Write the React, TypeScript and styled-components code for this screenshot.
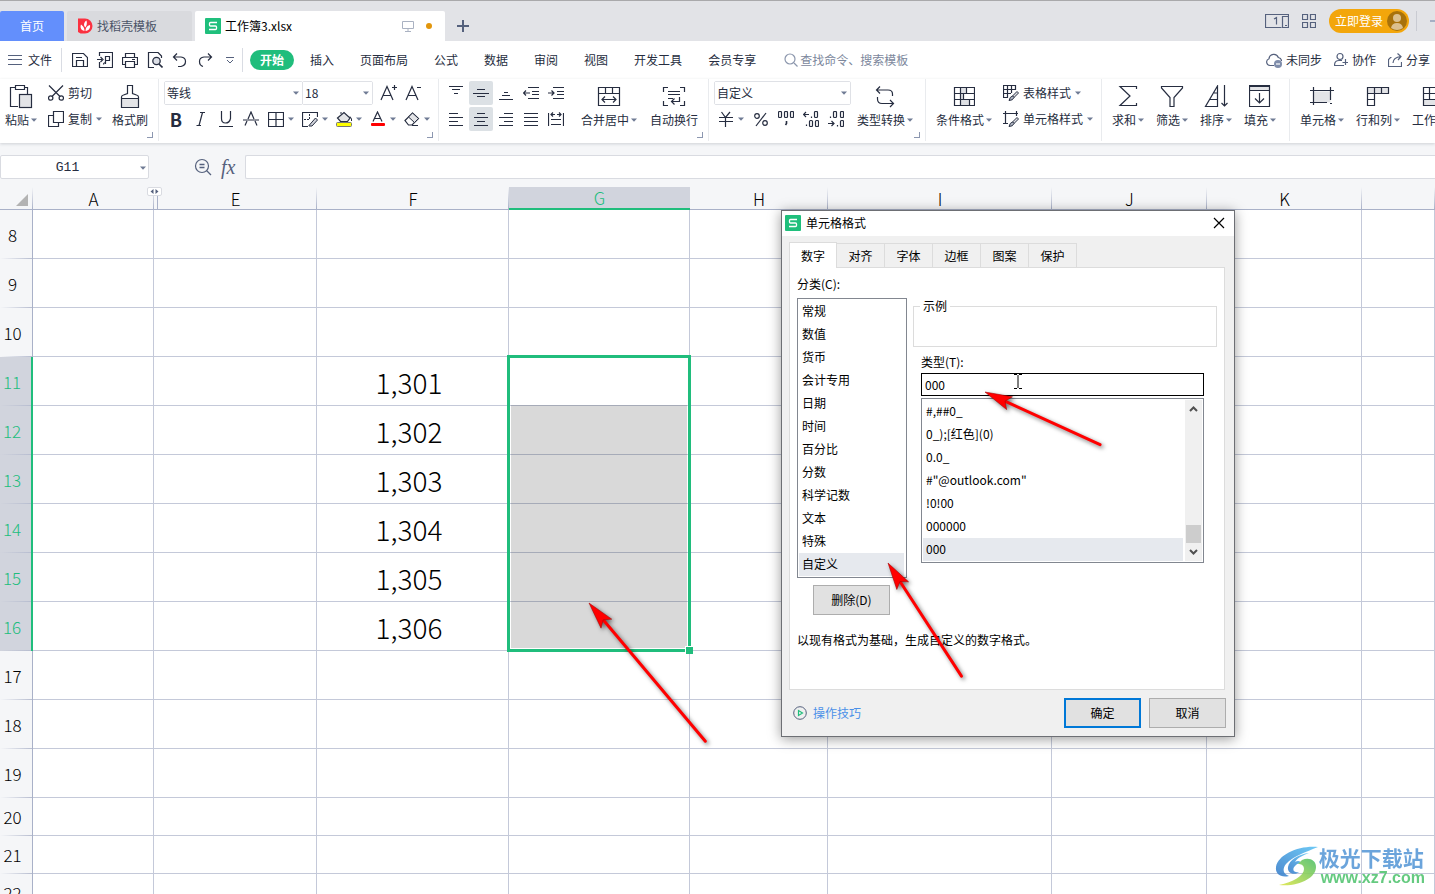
import React from 'react';
import styled, { createGlobalStyle, css } from 'styled-components';

const ink = '#262d40';
const slate = '#55617d';
const green = '#20bd7c';
const line = '#c4c9d9';

const GlobalStyle = createGlobalStyle`
  * { box-sizing: border-box; }
  body {
    margin: 0;
    overflow: hidden;
    font-family: "Noto Sans CJK SC", "Noto Sans", sans-serif;
    font-size: 12px;
    line-height: 18px;
    color: ${ink};
    background: #fff;
  }
  button, input, select { font: inherit; color: inherit; margin: 0; padding: 0; border: 0; background: none; }
  button { white-space: nowrap; }
  svg { display: block; flex: none; }
`;

/* ---------- icons ---------- */

type IconProps = { w?: number; h?: number; color?: string; children: React.ReactNode };

const Icon = ({ w = 16, h = 16, color = ink, children }: IconProps) => (
  <svg width={w} height={h} viewBox={`0 0 ${w} ${h}`} fill="none" stroke={color} strokeWidth="1" aria-hidden="true">
    {children}
  </svg>
);

const Caret = () => (
  <svg width="6" height="4" viewBox="0 0 6 4" aria-hidden="true">
    <path d="M0 0.500h6L3 3.800z" fill="#6f7b94" />
  </svg>
);

const SheetLogo = () => (
  <Icon color="#fff">
    <rect width="16" height="16" rx="1" fill="#1fbf7c" stroke="none" />
    <path d="M12 4.500H5.500Q4.500 4.500 4.500 5.500V7Q4.500 8 5.500 8H10.500Q11.500 8 11.500 9V10.500Q11.500 11.500 10.500 11.500H4" strokeWidth="1.300" />
  </Icon>
);

const DocerLogo = () => (
  <Icon color="none">
    <path d="M1 0.500H8A7.500 7.500 0 0 1 8 15.500H3.500L1 14z" fill="#fb3140" />
    <path d="M7.500 13C3.500 12 3 9 4 6.500C6 8 7.500 9.500 7.500 13zM7.300 8C6.500 6 7.500 3.500 9.500 2.500C10.300 5.500 9.800 7.500 8.300 9.500zM8.500 13C8.500 10 10 7.500 13 7C13.500 10 12 12.500 8.500 13z" fill="#fff" />
  </Icon>
);

const icons = {
  menu: <Icon w={14} h={12} color={slate}><path d="M0 1.500h14M0 5.500h14M0 10.500h14" /></Icon>,
  save: <Icon><path d="M0.500 1.500H11.500L15.500 5.500V14.500H0.500zM4.500 14V8.500H11.500V14M4 5.500H10" strokeWidth="1.200" /></Icon>,
  pdf: <Icon><path d="M2.500 4V0.500H15.500V15.500H2.500V10M0 7.500H5M3.500 5L6 7.500L3.500 10M8.500 12V4.500H12.500V8.500H8.500M6.500 12.500Q6.500 10.500 9 10.500" strokeWidth="1.200" /></Icon>,
  print: <Icon><path d="M3.500 5V1.500H12.500V5M3.500 12.500H0.500V5.500H15.500V12.500H12.500M3.500 9.500H12.500V15.500H3.500zM10 7.500H13" strokeWidth="1.200" /></Icon>,
  preview: <Icon><path d="M7 15.500H1.500V0.500H11L14.500 4V6" strokeWidth="1.200" /><circle cx="9.500" cy="9" r="3.700" fill="#dcdfe6" strokeWidth="1.300" /><path d="M12 12L15.500 15.500" strokeWidth="1.600" /></Icon>,
  undo: <Icon><path d="M5 1.500L1.500 5L5 8.500M1.500 5H9Q13.500 5.500 13.500 9.500T9 14.500H6" strokeWidth="1.200" /></Icon>,
  redo: <Icon><path d="M11 1.500L14.500 5L11 8.500M14.500 5H7Q2.500 5.500 2.500 9.500T6 14.500" strokeWidth="1.200" /></Icon>,
  more: <Icon w={8} h={8} color={slate}><path d="M0 1.500H8M1 4L4 7L7 4" /></Icon>,
  search: <Icon w={14} h={14} color="#8c97ad"><circle cx="6" cy="6" r="5" strokeWidth="1.200" /><path d="M10 10L13.500 13.500" strokeWidth="1.200" /></Icon>,
  cloud: <Icon color={slate}><path d="M8 13.500H4A3.500 3.500 0 0 1 3 6.700A4.800 4.800 0 0 1 12.300 5.500Q15.500 6 15.500 9" strokeWidth="1.200" /><circle cx="12" cy="12" r="4" fill="#7f8dab" stroke="none" /><path d="M10 12H14" stroke="#fff" strokeWidth="1.200" /></Icon>,
  collab: <Icon w={14} color={slate}><circle cx="6" cy="4.500" r="3" strokeWidth="1.200" /><path d="M10 13.500H0.500Q0.500 8.500 5 8.500H8M11.500 7V13M8.500 10.500H14" strokeWidth="1.200" /></Icon>,
  share: <Icon w={14} color={slate}><path d="M3.500 5.500H2.500L0.500 7.500V14.500H13.500V10M5 11Q5 5.500 13 4.500M9.500 1.500L13 4.500L10 8" strokeWidth="1.200" /></Icon>,
  paste: <Icon w={24} h={26}><path d="M7 3.500H1.500V22.500H9M15 3.500H18.500V10M6.500 1.500H15.500V5.500H6.500z" strokeWidth="1.200" /><rect x="10.500" y="10.500" width="12" height="13" fill="#e3e4e7" strokeWidth="1.200" /></Icon>,
  cut: <Icon><path d="M1 0.500L12 11.500M15 0.500L4 11.500" strokeWidth="1.200" /><circle cx="2.700" cy="13" r="2.200" strokeWidth="1.200" /><circle cx="13.300" cy="13" r="2.200" strokeWidth="1.200" /></Icon>,
  copy: <Icon><path d="M5.500 0.500H15.500V11.500H5.500zM5 4.500H0.500V15.500H10.500V12" strokeWidth="1.200" /></Icon>,
  brush: <Icon w={20} h={26}><path d="M1.500 14.500H18.500V23.500H1.500z" fill="#e3e4e7" /><path d="M1.500 23.500V13Q1.500 11.500 3.500 11L7.500 9.500V1.500H12.500V9.500L16.500 11Q18.500 11.500 18.500 13V23.500z" strokeWidth="1.200" /></Icon>,
  growFont: <Icon w={18} h={18}><path d="M2 16L8 2.500L14 16M4.500 11.500H11.500M13 3.500H18M15.500 1V6" strokeWidth="1.200" /></Icon>,
  shrinkFont: <Icon w={18} h={18}><path d="M2 16L8 2.500L14 16M4.500 11.500H11.500M13 3.500H17" strokeWidth="1.200" /></Icon>,
  italic: <Icon><path d="M7 1.500H12M3.500 14.500H8M9.500 1.500L6 14.500" strokeWidth="1.200" /></Icon>,
  underline: <Icon><path d="M3.500 0V7.500Q3.500 12 7.500 12T12.500 7.500V0M1 15.500H15" strokeWidth="1.200" /></Icon>,
  strike: <Icon><path d="M5 8L8 1L11 8M4 10L2 14.500M12 10L14 14.500M0 9H16" strokeWidth="1.200" /></Icon>,
  borders: <Icon><path d="M0.500 1.500H15.500V15.500H0.500zM0 8.500H16M8 1.500V15.500" strokeWidth="1.200" /></Icon>,
  drawBorder: <Icon><path d="M15.500 6V1.500H0.500V15.500H6" strokeWidth="1.200" /><path d="M7.500 3V9M2 8.500H8" strokeDasharray="2 1" /><path d="M7 14.500L13.500 7L15.500 9L10 15H7z" fill="#cfd2da" /></Icon>,
  fill: <Icon><path d="M1.500 7L8 1.500L14 7L11.500 10.500H4.500z" fill="#e3e4e7" strokeWidth="1.200" /><path d="M14 5.500L15.500 8V10M5 3V1" /><rect x="0.500" y="11.500" width="15" height="4" rx="1" fill="#ff0" stroke="#777" /></Icon>,
  fontColor: <Icon><path d="M3 10.500L7.500 1L12 10.500M4.500 7.500H10.500" strokeWidth="1.200" /><rect x="1" y="12" width="14" height="3" rx="1" fill="#f00" stroke="none" /></Icon>,
  eraser: <Icon><path d="M1 9.500L8.500 2L14.500 7.500L8 14H4.500z" strokeWidth="1.200" /><path d="M4.500 6L8.500 2L14.500 7.500L10.500 11.500z" fill="#e3e4e7" /><path d="M8 14.500H14" /></Icon>,
  top: <Icon><path d="M1 1.500H15M4 4.500H12M6 8.500H10" strokeWidth="1.200" /></Icon>,
  middle: <Icon><path d="M4 4.500H12M0 8.500H16M4 11.500H12" strokeWidth="1.200" /></Icon>,
  bottom: <Icon><path d="M6 7.500H10M4 10.500H12M1 14.500H15" strokeWidth="1.200" /></Icon>,
  outdent: <Icon><path d="M5 2.500H16M9 6.500H16M9 9.500H16M5 13.500H16M0.500 8H7M3 5.500L0.500 8L3 10.500" strokeWidth="1.200" /></Icon>,
  indent: <Icon><path d="M5 2.500H16M9 6.500H16M9 9.500H16M5 13.500H16M0 8H6M3.500 5.500L6 8L3.500 10.500" strokeWidth="1.200" /></Icon>,
  left: <Icon><path d="M1 2.500H10M1 6.500H15M1 10.500H10M1 14.500H15" strokeWidth="1.200" /></Icon>,
  center: <Icon><path d="M4 2.500H12M1 6.500H15M4 10.500H12M1 14.500H15" strokeWidth="1.200" /></Icon>,
  right: <Icon><path d="M6 2.500H15M1 6.500H15M6 10.500H15M1 14.500H15" strokeWidth="1.200" /></Icon>,
  justify: <Icon><path d="M1 2.500H15M1 6.500H15M1 10.500H15M1 14.500H15" strokeWidth="1.200" /></Icon>,
  distribute: <Icon><path d="M0.500 2V15M15.500 2V15M3 8.500H13M3 13.500H13M3 3.500H7M9 3.500H13M5 1.500L3 3.500L5 5.500M11 1.500L13 3.500L11 5.500" strokeWidth="1.200" /></Icon>,
  merge: <Icon w={24} h={24}><path d="M1.500 2.500H22.500V20.500H1.500zM1.500 8.500H22.500M8.500 2.500V8.500M15.500 2.500V8.500M5 14.500H19M8 11.500L5 14.500L8 17.500M16 11.500L19 14.500L16 17.500" strokeWidth="1.200" /></Icon>,
  wrap: <Icon w={24} h={24}><path d="M6 2.500H1.500V7M18 2.500H22.500V7M6 20.500H1.500V16M18 20.500H22.500V16M6 6.500H18M6 9.500H18M6 13.500H11M17.500 12V16.500H10M12.500 13.500L9.500 16.500L12.500 19.500" strokeWidth="1.200" /></Icon>,
  yen: <Icon><path d="M3.500 1L7.500 6.500L12 1M1 6.500H15M1 10.500H15M7.500 6.500V16" strokeWidth="1.200" /></Icon>,
  percent: <Icon><circle cx="4" cy="5" r="2.300" strokeWidth="1.200" /><circle cx="12" cy="12" r="2.300" strokeWidth="1.200" /><path d="M13 2L3 15" strokeWidth="1.200" /></Icon>,
  thousands: <Icon><rect x="0.500" y="0.500" width="3" height="6" rx="1" strokeWidth="1.200" /><rect x="6.500" y="0.500" width="3" height="6" rx="1" strokeWidth="1.200" /><rect x="12.500" y="0.500" width="3" height="6" rx="1" strokeWidth="1.200" /><path d="M8.500 10V12.500L7.500 14" strokeWidth="1.600" /></Icon>,
  moreDecimals: <Icon><path d="M0.500 3.500H6M3 1L0.500 3.500L3 6M8.500 5.500V7M3.500 13.500V15" strokeWidth="1.200" /><rect x="11.500" y="0.500" width="3" height="6" rx="1" strokeWidth="1.200" /><rect x="6.500" y="9.500" width="3" height="6" rx="1" strokeWidth="1.200" /><rect x="12.500" y="9.500" width="3" height="6" rx="1" strokeWidth="1.200" /></Icon>,
  lessDecimals: <Icon><path d="M0 12.500H6M3.500 10L6 12.500L3.500 15M2.500 5.500V7M9.500 14V15.500" strokeWidth="1.200" /><rect x="5.500" y="0.500" width="3" height="6" rx="1" strokeWidth="1.200" /><rect x="12.500" y="0.500" width="3" height="6" rx="1" strokeWidth="1.200" /><rect x="12.500" y="9.500" width="3" height="6" rx="1" strokeWidth="1.200" /></Icon>,
  convert: <Icon w={20} h={24}><path d="M5 1.500L1.500 5L5 8.500M1.500 5H13Q17.500 5 17.500 9V11M15 15L18.500 18.500L15 22M18.500 18.500H7Q2.500 18.500 2.500 14V12" strokeWidth="1.200" /></Icon>,
  condFormat: <Icon w={22} h={24}><path d="M7.500 2.500H13.500V8.500H7.500zM7.500 8.500H10.500V14.500H7.500zM7.500 14.500H16.500V20.500H7.500z" fill="#dfe1e5" stroke="none" /><path d="M1.500 2.500H21.500V20.500H1.500zM1.500 8.500H21.500M1.500 14.500H21.500M7.500 2.500V20.500M13.500 2.500V8.500M10.500 8.500V14.500M16.500 14.500V20.500" strokeWidth="1.200" /></Icon>,
  tableStyle: <Icon><path d="M5 12.500H0.500V0.500H12.500V5M0.500 4.500H12.500M0.500 8.500H8M4.500 0.500V12.500M8.500 0.500V8" strokeWidth="1.200" /><path d="M14 6.500L15.500 8L11 12.500L9.500 11z" fill="#dfe1e5" /><path d="M9.500 11L11 12.500Q10 15.500 6 15.500Q7 11.500 9.500 11z" fill="#b4b9c6" /></Icon>,
  cellStyle: <Icon><path d="M2.500 0V13M0 2.500H15M13.500 0V5M0 12.500H5" strokeWidth="1.200" /><path d="M14 6.500L15.500 8L11 12.500L9.500 11z" fill="#dfe1e5" /><path d="M9.500 11L11 12.500Q10 15.500 6 15.500Q7 11.500 9.500 11z" fill="#b4b9c6" /></Icon>,
  sum: <Icon w={20} h={24}><path d="M18.500 4V1.500H2L12 11L2 20.500H18.500V18" strokeWidth="1.200" /></Icon>,
  filter: <Icon w={24} h={24}><path d="M1.500 1.500H22.500V3L14 12.500V21.500H10V12.500L1.500 3z" strokeWidth="1.200" /></Icon>,
  sort: <Icon w={24} h={24}><path d="M13.500 21.500H1.500L13.500 1zM6 14.500H13.500M10 8H13.500M20.500 0V21M17.500 18L20.500 21L23.500 18" strokeWidth="1.200" /></Icon>,
  fillDown: <Icon w={22} h={24}><path d="M0.500 1.500H20.500V5.500H0.500z" fill="#e3e4e7" /><path d="M0.500 0.500H20.500V21.500H0.500zM0.500 5.500H20.500M10.500 8V18M6 13.500L10.500 18L15 13.500" strokeWidth="1.200" /></Icon>,
  cells: <Icon w={24} h={24}><path d="M3.500 6.500H20.500V17.500H3.500z" fill="#e3e4e7" stroke="none" /><path d="M3.500 2V20M20.500 2V15M0 5.500H24M0 17.500H17M20 18.500H22" strokeWidth="1.200" /></Icon>,
  rowsCols: <Icon w={24} h={24}><path d="M1.500 2.500H22.500V8.500H1.500z" fill="#e3e4e7" /><path d="M1.500 20.500V2.500H22.500V8.500H8.500V20.500zM1.500 8.500H8.500M1.500 14.500H8.500M8.500 2.500V8.500M15.500 2.500V8.500" strokeWidth="1.200" /></Icon>,
  sheet: <Icon w={24} h={24}><path d="M1.500 14.500H22.500V20.500H1.500z" fill="#e3e4e7" /><path d="M1.500 2.500H22.500V20.500H1.500zM1.500 8.500H22.500M1.500 14.500H22.500M7.500 2.500V14.500M14.500 2.500V14.500" strokeWidth="1.200" /></Icon>,
  zoomOut: <Icon w={18} h={18} color={slate}><circle cx="8" cy="8" r="6.500" strokeWidth="1.200" /><path d="M5.500 6.500H10.500M5.500 9.500H10.500M12.500 12.500L17 17" strokeWidth="1.300" /></Icon>,
  screens: <Icon w={24} h={14} color={slate}><path d="M16.500 13.500H0.500V0.500H23.500V13.500H17.500V2.500H23M9 5L11.500 3.500V10.500M20 11.500H22" strokeWidth="1.200" /></Icon>,
  grid: <Icon w={14} h={14} color={slate}><path d="M0.500 0.500H5.500V5.500H0.500zM8.500 0.500H13.500V5.500H8.500zM0.500 8.500H5.500V13.500H0.500zM8.500 8.500H13.500V13.500H8.500z" strokeWidth="1.200" /></Icon>,
  monitor: <Icon w={12} h={12} color="#aab2c2"><path d="M0.500 1.500H11.500V8.500H0.500zM6 8.500V11M3 11.500H9" /></Icon>,
  plus: <Icon w={12} h={12} color={slate}><path d="M6 0V12M0 6H12" strokeWidth="2" /></Icon>,
  close: <Icon w={12} h={12} color="#000"><path d="M1 1L11 11M11 1L1 11" strokeWidth="1.200" /></Icon>,
  tips: <Icon w={14} h={14} color={slate}><circle cx="7" cy="7" r="6.300" /><path d="M5.500 4.500V9.500L9.500 7z" stroke={green} strokeWidth="1.200" /></Icon>,
};

/* ---------- window chrome ---------- */

const Page = styled.div`
  position: relative;
  display: flex;
  flex-direction: column;
  height: 100vh;
  overflow: hidden;
`;

const TitleBar = styled.header`
  display: flex;
  align-items: flex-end;
  height: 41px;
  flex: none;
  border-top: 1px solid #a9a9ab;
  background: #e2e3e7;
`;

const DocTab = styled.button<{ $kind: 'home' | 'idle' | 'active' }>`
  display: flex;
  align-items: center;
  gap: 4px;
  height: 30px;
  padding: 0 10px;
  border-radius: 2px 2px 0 0;
  ${p => p.$kind === 'home' && css`width: 64px; justify-content: center; background: #638ffc; color: #fff; margin-right: 3px;`}
  ${p => p.$kind === 'idle' && css`width: 125px; background: #d9dade; color: #4b5468; margin-right: 3px;`}
  ${p => p.$kind === 'active' && css`width: 250px; background: #fff; color: #000;`}
`;

const TabName = styled.span`
  flex: 1;
  text-align: left;
`;

const Dirty = styled.span`
  width: 6px;
  height: 6px;
  margin: 0 3px 0 8px;
  border-radius: 50%;
  background: #e2960c;
`;

const NewTab = styled.button`
  display: grid;
  place-items: center;
  width: 36px;
  height: 30px;
`;

const TitleTools = styled.div`
  display: flex;
  align-items: center;
  gap: 13px;
  height: 40px;
  margin-left: auto;
`;

const Login = styled.button`
  display: flex;
  align-items: center;
  justify-content: space-between;
  width: 80px;
  height: 24px;
  padding: 0 2px 0 6px;
  border-radius: 12px;
  background: #f3a60b;
  color: #fff;
`;

const WindowButtons = styled.div`
  display: flex;
  align-items: center;
  width: 19px;
  height: 20px;
  padding-left: 13px;
  margin-left: -6px;
  border-left: 1px solid #c9cbd2;
`;

const MenuBar = styled.nav`
  display: flex;
  align-items: center;
  flex: none;
  height: 38px;
  padding: 0 5px 0 8px;
`;

const MenuItem = styled.button`
  display: flex;
  align-items: center;
  gap: 6px;
  margin-right: 26px;
`;

const FileButton = styled(MenuItem)`
  margin-right: 0;
  padding-right: 9px;
`;

const QuickTools = styled.div`
  display: flex;
  align-items: center;
  gap: 9px;
  height: 24px;
  padding: 0 12px 0 10px;
  margin-right: 7px;
  border: solid #d9dce3;
  border-width: 0 1px;
  button:last-child { margin: 0 -4px 0 4px; }
`;

const ActiveMenu = styled.button`
  width: 44px;
  height: 20px;
  margin-right: 16px;
  border-radius: 10px;
  background: ${green};
  color: #fff;
  font-weight: 700;
`;

const Search = styled.label`
  display: flex;
  align-items: center;
  gap: 2px;
  padding-left: 2px;
  input { width: 130px; outline: 0; }
  input::placeholder { color: #7c879c; opacity: 1; }
`;

const MenuRight = styled.div`
  display: flex;
  gap: 12px;
  margin-left: auto;
  ${MenuItem} { margin: 0; gap: 4px; }
`;

/* ---------- ribbon ---------- */

const Ribbon = styled.section`
  position: relative;
  z-index: 1;
  display: flex;
  flex: none;
  height: 64px;
  background: #fff;
  box-shadow: 0 1px 3px rgba(30, 40, 60, 0.18);
`;

const Group = styled.div<{ $width: number; $pad?: number; $gap?: number; $launcher?: boolean }>`
  position: relative;
  display: flex;
  align-items: flex-start;
  flex: none;
  width: ${p => p.$width}px;
  height: 62px;
  padding: 2px 0 0 ${p => p.$pad ?? 5}px;
  gap: ${p => p.$gap ?? 12}px;
  border-right: 1px solid #e9ebee;
  ${p => p.$launcher && css`
    &::after {
      content: '';
      position: absolute;
      right: 5px;
      bottom: 3px;
      width: 5px;
      height: 5px;
      border: solid #8c97b0;
      border-width: 0 1px 1px 0;
    }
  `}
`;

const Stack = styled.div`
  display: flex;
  flex-direction: column;
  gap: 2px;
`;

const Row = styled.div`
  display: flex;
  gap: 1px;
  height: 24px;
`;

const Tool = styled.button<{ $on?: boolean }>`
  display: grid;
  place-items: center;
  width: 24px;
  height: 24px;
  border-radius: 2px;
  background: ${p => (p.$on ? '#dce1e5' : 'transparent')};
  font-size: 18px;
  font-weight: 700;
  line-height: 22px;
`;

const DropTool = styled.button`
  display: flex;
  align-items: center;
  justify-content: center;
  gap: 4px;
  width: 34px;
  height: 24px;
  & + & { margin-left: -1px; }
`;

const TextTool = styled.button`
  display: flex;
  align-items: center;
  gap: 4px;
  height: 24px;
  padding-left: 1px;
`;

const BigTool = styled.button`
  display: flex;
  flex-direction: column;
  align-items: center;
  height: 50px;
  padding-top: 2px;
`;

const BigIcon = styled.span`
  display: grid;
  place-items: center;
  height: 28px;
`;

const BigLabel = styled.span`
  display: flex;
  align-items: center;
  gap: 2px;
`;

const Combo = styled.label<{ $width: number }>`
  position: relative;
  width: ${p => p.$width}px;
  height: 24px;
  border: 1px solid #dfe1e6;
  border-radius: 2px;
  & + & { margin: 0 2px 0 -2px; }
  select {
    appearance: none;
    width: 100%;
    height: 22px;
    padding-left: 2px;
    background: #fff;
  }
  svg { position: absolute; right: 3px; top: 9px; pointer-events: none; }
`;

const Big = ({ icon, label, drop = true }: { icon: React.ReactNode; label: string; drop?: boolean }) => (
  <BigTool>
    <BigIcon>{icon}</BigIcon>
    <BigLabel>{label}{drop && <Caret />}</BigLabel>
  </BigTool>
);

const Select = ({ width, value, name }: { width: number; value: string; name: string }) => (
  <Combo $width={width}>
    <select aria-label={name}><option>{value}</option></select>
    <Caret />
  </Combo>
);

/* ---------- formula bar ---------- */

const FormulaBar = styled.div`
  display: flex;
  align-items: center;
  flex: none;
  height: 44px;
  padding-top: 4px;
  background: #f5f6f8;
`;

const NameBox = styled.label`
  position: relative;
  width: 149px;
  height: 24px;
  border: 1px solid #d9dbe1;
  border-radius: 2px;
  background: #fff;
  input {
    width: 100%;
    height: 22px;
    padding-right: 14px;
    text-align: center;
    font-family: "Liberation Mono", monospace;
    font-size: 13px;
  }
  svg { position: absolute; right: 2px; top: 10px; }
`;

const FormulaTools = styled.div`
  display: flex;
  align-items: center;
  gap: 9px;
  width: 96px;
  padding-left: 45px;
`;

const Fx = styled.button`
  color: ${slate};
  font: italic 20px/22px "Liberation Serif", serif;
`;

const FormulaInput = styled.input`
  && {
    flex: 1;
    height: 24px;
    border: 1px solid #d9dbe1;
    border-right: 0;
    border-radius: 2px 0 0 2px;
    background: #fff;
  }
`;

/* ---------- sheet ---------- */

const SheetArea = styled.main`
  flex: 1;
  min-height: 0;
  overflow: hidden;
`;

const SheetTable = styled.table`
  width: 100%;
  table-layout: fixed;
  border-collapse: separate;
  border-spacing: 0;
  th { font-size: 17px; font-weight: 300; line-height: 20px; padding: 0; color: #000; }
`;

const ColHead = styled.th<{ $on?: boolean }>`
  position: relative;
  height: 23px;
  border-bottom: 1px solid #a9b1c8;
  background: linear-gradient(#f5f6f8, #a9b1c8) right / 1px 100% no-repeat, #f5f6f8;
  && { padding-top: 1px; }
  ${p => p.$on && css`
    && { color: ${green}; }
    border-bottom: 2px solid ${green};
    background: #d1d4dd;
  `}
`;

const Corner = styled.th`
  border-bottom: 1px solid #a9b1c8;
  background: linear-gradient(#f5f6f8, #a9b1c8) right / 1px 100% no-repeat, #f5f6f8;
  svg { margin: 4px 0 0 16px; }
`;

const HiddenMark = styled.span`
  position: absolute;
  z-index: 1;
  right: -8px;
  top: 0;
  display: grid;
  place-items: center;
  width: 15px;
  height: 9px;
  border: 1px solid #d9dbe1;
  border-radius: 2px;
  background: #fff;
  &::after {
    content: '';
    position: absolute;
    left: 9px;
    top: 8px;
    width: 1px;
    height: 14px;
    background: #a9b1c8;
  }
`;

const RowHead = styled.th<{ $on?: boolean }>`
  border-right: 1px solid #a9b1c8;
  background: linear-gradient(90deg, #f5f6f8, #b7bdd0) bottom / 100% 1px no-repeat, #f5f6f8;
  && { padding-right: 7px; }
  ${p => p.$on && css`
    && { color: ${green}; }
    border-right: 2px solid ${green};
    background: linear-gradient(90deg, #d1d4dd, #b7bdd0) bottom / 100% 1px no-repeat, #d1d4dd;
  `}
`;

const Cell = styled.td`
  position: relative;
  padding: 2px 7px 0 0;
  border: solid ${line};
  border-width: 0 1px 1px 0;
  text-align: center;
  font-size: 28px;
  font-weight: 300;
  line-height: 30px;
  color: #000;
`;

const SheetRow = styled.tr<{ $height: number }>`
  height: ${p => p.$height}px;
`;

const Selection = styled.div`
  position: absolute;
  z-index: 1;
  left: -2px;
  right: -2px;
  top: -2px;
  height: 297px;
  padding: 47px 1px 1px;
  border: 3px solid ${green};
  &::before {
    content: '';
    display: block;
    height: 100%;
    background: rgba(0, 0, 0, 0.15);
  }
  &::after {
    content: '';
    position: absolute;
    right: -5px;
    bottom: -5px;
    width: 7px;
    height: 7px;
    border: solid #fff;
    border-width: 1px 0 0 1px;
    background: ${green};
  }
`;

const columns = [
  { name: 'A', width: 121 },
  { name: 'E', width: 163 },
  { name: 'F', width: 192 },
  { name: 'G', width: 181 },
  { name: 'H', width: 138 },
  { name: 'I', width: 224 },
  { name: 'J', width: 155 },
  { name: 'K', width: 155 },
  { name: '', width: 0 },
];

const values: Record<number, string> = { 11: '1,301', 12: '1,302', 13: '1,303', 14: '1,304', 15: '1,305', 16: '1,306' };
const rowNumbers = Array.from({ length: 15 }, (_, i) => i + 8);

const Sheet = () => (
  <SheetArea>
    <SheetTable>
      <colgroup>
        <col width={33} />
        {columns.map(c => <col key={c.name} width={c.width || undefined} />)}
      </colgroup>
      <thead>
        <tr>
          <Corner>
            <svg width="12" height="12" viewBox="0 0 12 12"><path d="M12 0V12H0z" fill="#b3b3b3" /></svg>
          </Corner>
          {columns.map(c => (
            <ColHead key={c.name} scope="col" $on={c.name === 'G'}>
              {c.name}
              {c.name === 'A' && (
                <HiddenMark>
                  <svg width="9" height="5" viewBox="0 0 9 5"><path d="M3.500 0V5L0.500 2.500zM5.500 0V5L8.500 2.500z" fill={slate} /></svg>
                </HiddenMark>
              )}
            </ColHead>
          ))}
        </tr>
      </thead>
      <tbody>
        {rowNumbers.map(n => (
          <SheetRow key={n} $height={n < 20 ? 49 : 38}>
            <RowHead scope="row" $on={n in values}>{n}</RowHead>
            {columns.map(c => (
              <Cell key={c.name}>
                {c.name === 'F' && values[n]}
                {c.name === 'G' && n === 11 && <Selection />}
              </Cell>
            ))}
          </SheetRow>
        ))}
      </tbody>
    </SheetTable>
  </SheetArea>
);

/* ---------- format dialog ---------- */

const Dialog = styled.section`
  position: absolute;
  z-index: 2;
  left: 781px;
  top: 210px;
  width: 454px;
  border: 1px solid #6d6f74;
  background: #f0f0f0;
  color: #000;
  box-shadow: 0 2px 12px rgba(0, 0, 0, 0.4);
`;

const DialogTitle = styled.div`
  display: flex;
  align-items: center;
  gap: 5px;
  height: 25px;
  padding: 0 9px 1px 3px;
  background: #fff;
  h2 { flex: 1; margin: 0; font-size: 12px; font-weight: 400; }
`;

const Tabs = styled.div`
  display: flex;
  align-items: flex-end;
  height: 31px;
  padding-left: 7px;
`;

const DialogTab = styled.button<{ $on?: boolean }>`
  && {
    width: 48px;
    height: 24px;
    border: solid #dcdcdc;
    border-width: 1px 1px 0 0;
    ${p => p.$on && css`
      position: relative;
      height: 26px;
      margin-bottom: -1px;
      border-left-width: 1px;
      background: #fff;
    `}
  }
`;

const Panel = styled.div`
  height: 423px;
  margin: 0 9px 0 7px;
  padding: 6px 7px;
  border: 1px solid #dcdcdc;
  background: #fff;
`;

const Columns = styled.div`
  display: flex;
  align-items: flex-start;
  gap: 6px;
`;

const CategoryPane = styled.div`
  width: 110px;
`;

const Caption = styled.div`
  height: 24px;
  line-height: 20px;
`;

const ListBox = styled.ul`
  flex: 1;
  margin: 0;
  padding: 1px;
  list-style: none;
`;

const Categories = styled(ListBox)`
  border: 1px solid #828790;
`;

const Option = styled.li<{ $on?: boolean }>`
  height: 23px;
  padding-left: 3px;
  margin-right: 1px;
  line-height: 22px;
  background: ${p => (p.$on ? '#e6e9ee' : 'transparent')};
`;

const PushButton = styled.button<{ $primary?: boolean }>`
  && {
    width: 77px;
    height: 30px;
    border: ${p => (p.$primary ? '2px solid #0078d7' : '1px solid #adadad')};
    background: #e1e1e1;
  }
`;

const DeleteSlot = styled.div`
  padding: 7px 0 0 16px;
`;

const Detail = styled.div`
  flex: 1;
  padding-top: 23px;
`;

const Sample = styled.fieldset`
  height: 50px;
  margin: 0;
  padding: 0 6px;
  border: 1px solid #dcdcdc;
  legend { padding: 0 3px; }
`;

const TypeField = styled.div`
  margin: 5px 13px 0 8px;
  label { display: block; height: 21px; line-height: 20px; }
  input {
    width: 100%;
    height: 23px;
    padding: 0 0 1px 3px;
    border: 1px solid #000;
    outline: 0;
  }
`;

const TypeList = styled.div`
  display: flex;
  height: 165px;
  margin-top: 2px;
  border: 1px solid #828790;
`;

const ScrollBar = styled.div`
  display: flex;
  flex-direction: column;
  justify-content: space-between;
  align-items: center;
  width: 17px;
  margin: 1px 1px 1px 0;
  padding: 6px 0;
  background: #f0f0f0;
`;

const Thumb = styled.div`
  width: 15px;
  height: 18px;
  margin: auto 0 6px;
  background: #cdcdcd;
`;

const Hint = styled.p`
  margin: 16px 0 0;
`;

const Footer = styled.footer`
  display: flex;
  align-items: center;
  gap: 8px;
  height: 46px;
  padding: 0 8px 0 11px;
`;

const TipsLink = styled.a`
  display: flex;
  align-items: center;
  gap: 6px;
  margin-right: auto;
  color: #4a90e8;
  text-decoration: none;
`;

const Overlay = styled.svg<{ $x: number; $y: number }>`
  position: absolute;
  z-index: 3;
  left: ${p => p.$x}px;
  top: ${p => p.$y}px;
  overflow: visible;
  pointer-events: none;
`;

const ArrowOverlay = styled(Overlay)`
  filter: drop-shadow(2px 2px 2px rgba(0, 0, 0, 0.55));
`;

const PointerArrow = ({ x, y, dx, dy }: { x: number; y: number; dx: number; dy: number }) => {
  const length = Math.hypot(dx, dy);
  const angle = (Math.atan2(dy, dx) * 180) / Math.PI;
  return (
    <ArrowOverlay $x={x} $y={y} width={dx} height={dy}>
      <g transform={`rotate(${angle})`} fill="#f00">
        <path d={`M20 0H${length - 1}`} stroke="#f00" strokeWidth="3" strokeLinecap="round" />
        <path d="M0 0L27 -7L22 0L27 7z" stroke="#a40000" strokeWidth="0.500" />
      </g>
    </ArrowOverlay>
  );
};

const categories = ['常规', '数值', '货币', '会计专用', '日期', '时间', '百分比', '分数', '科学记数', '文本', '特殊', '自定义'];
const formats = ['#,##0_', '0_);[红色](0)', '0.0_', '#"@outlook.com"', '!0!00', '000000', '000'];
const Chevron = ({ up }: { up?: boolean }) => (
  <Icon w={9} h={6} color="#505050"><path d={up ? 'M1 5L4.500 1.500L8 5' : 'M1 1L4.500 4.500L8 1'} strokeWidth="2" /></Icon>
);

const FormatDialog = () => (
  <Dialog role="dialog" aria-labelledby="format-title">
    <DialogTitle>
      <SheetLogo />
      <h2 id="format-title">单元格格式</h2>
      <button aria-label="关闭">{icons.close}</button>
    </DialogTitle>
    <Tabs role="tablist">
      {['数字', '对齐', '字体', '边框', '图案', '保护'].map((t, i) => (
        <DialogTab key={t} role="tab" aria-selected={i === 0} $on={i === 0}>{t}</DialogTab>
      ))}
    </Tabs>
    <Panel>
      <Columns>
        <CategoryPane>
          <Caption id="category-label">分类(C):</Caption>
          <Categories role="listbox" aria-labelledby="category-label">
            {categories.map(c => (
              <Option key={c} role="option" aria-selected={c === '自定义'} $on={c === '自定义'}>{c}</Option>
            ))}
          </Categories>
          <DeleteSlot><PushButton>删除(D)</PushButton></DeleteSlot>
        </CategoryPane>
        <Detail>
          <Sample><legend>示例</legend></Sample>
          <TypeField>
            <label htmlFor="format-type">类型(T):</label>
            <input id="format-type" defaultValue="000" />
            <TypeList>
              <ListBox role="listbox" aria-label="类型">
                {formats.map(f => (
                  <Option key={f} role="option" aria-selected={f === '000'} $on={f === '000'}>{f}</Option>
                ))}
              </ListBox>
              <ScrollBar>
                <Chevron up />
                <Thumb />
                <Chevron />
              </ScrollBar>
            </TypeList>
          </TypeField>
        </Detail>
      </Columns>
      <Hint>以现有格式为基础，生成自定义的数字格式。</Hint>
    </Panel>
    <Footer>
      <TipsLink href="#tips">{icons.tips}操作技巧</TipsLink>
      <PushButton $primary>确定</PushButton>
      <PushButton>取消</PushButton>
    </Footer>
    <Overlay $x={231} $y={163} width="10" height="15">
      <path d="M1 0.500H4M6 0.500H9M5 1V14M1 14.500H4M6 14.500H9" stroke="#000" />
    </Overlay>
    <PointerArrow x={203} y={181} dx={116} dy={53} />
    <PointerArrow x={106} y={352} dx={74} dy={114} />
  </Dialog>
);

/* ---------- site mark ---------- */

const SiteMark = styled.aside`
  position: absolute;
  z-index: 4;
  right: 10px;
  bottom: 7px;
  display: flex;
  align-items: center;
  opacity: 0.9;
  pointer-events: none;
  strong { display: block; color: #5b9bd8; font-size: 21px; line-height: 24px; }
  span { display: block; padding-left: 2px; color: #55c573; font: 700 16px/18px "Liberation Sans", sans-serif; }
`;

const SiteLogo = () => (
  <svg width="44" height="42" viewBox="0 0 44 42" aria-hidden="true">
    <defs>
      <linearGradient id="markBlue" x1="0" y1="1" x2="1" y2="0"><stop offset="0" stopColor="#3b7fcb" /><stop offset="1" stopColor="#5fc4f5" /></linearGradient>
      <linearGradient id="markGreen" x1="0" y1="1" x2="1" y2="0"><stop offset="0" stopColor="#dfe64a" /><stop offset="1" stopColor="#4fc06c" /></linearGradient>
    </defs>
    <path d="M43 2C25 0 3 9 1 22C0 29 6 33 14 31C8 29 7 24 11 19C18 11 31 7 43 2z" fill="url(#markBlue)" />
    <path d="M34 8C24 9 14 15 13 22C12 28 19 31 24 27C18 28 17 24 20 21C22 18 25 18 27 19C26 16 23 15 20 17C23 12 29 10 34 8z" fill="url(#markBlue)" />
    <path d="M27 15C34 12 41 15 41 22C41 33 24 42 4 40C18 37 29 31 29 24C29 20 26 19 23 19z" fill="url(#markGreen)" />
  </svg>
);

/* ---------- page ---------- */

const App = () => (
  <Page>
    <GlobalStyle />
    <TitleBar>
      <DocTab $kind="home">首页</DocTab>
      <DocTab $kind="idle"><DocerLogo />找稻壳模板</DocTab>
      <DocTab $kind="active">
        <SheetLogo /><TabName>工作簿3.xlsx</TabName>{icons.monitor}<Dirty />
      </DocTab>
      <NewTab aria-label="新建">{icons.plus}</NewTab>
      <TitleTools>
        <button aria-label="窗口">{icons.screens}</button>
        <button aria-label="应用">{icons.grid}</button>
        <Login>
          立即登录
          <svg width="20" height="20" viewBox="0 0 20 20" aria-hidden="true">
            <circle cx="10" cy="10" r="10" fill="#a8720a" />
            <circle cx="10" cy="7" r="4" fill="#dcc08d" />
            <path d="M4 17Q5 12 10 12T16 17Q10 21 4 17z" fill="#dcc08d" />
          </svg>
        </Login>
        <WindowButtons>
          <button aria-label="最小化"><Icon w={10} h={2} color="#7d8cad"><path d="M0 1H10" strokeWidth="1.200" /></Icon></button>
        </WindowButtons>
      </TitleTools>
    </TitleBar>

    <MenuBar>
      <FileButton>{icons.menu}文件</FileButton>
      <QuickTools>
        <button aria-label="保存">{icons.save}</button>
        <button aria-label="输出为PDF">{icons.pdf}</button>
        <button aria-label="打印">{icons.print}</button>
        <button aria-label="打印预览">{icons.preview}</button>
        <button aria-label="撤销">{icons.undo}</button>
        <button aria-label="恢复">{icons.redo}</button>
        <button aria-label="更多">{icons.more}</button>
      </QuickTools>
      <ActiveMenu>开始</ActiveMenu>
      {['插入', '页面布局', '公式', '数据', '审阅', '视图', '开发工具', '会员专享'].map(m => <MenuItem key={m}>{m}</MenuItem>)}
      <Search>{icons.search}<input aria-label="搜索" placeholder="查找命令、搜索模板" /></Search>
      <MenuRight>
        <MenuItem>{icons.cloud}未同步</MenuItem>
        <MenuItem>{icons.collab}协作</MenuItem>
        <MenuItem>{icons.share}分享</MenuItem>
      </MenuRight>
    </MenuBar>

    <Ribbon>
      <Group $width={159} $gap={10} $launcher>
        <Big icon={icons.paste} label="粘贴" />
        <Stack>
          <TextTool>{icons.cut}剪切</TextTool>
          <TextTool>{icons.copy}复制<Caret /></TextTool>
        </Stack>
        <Big icon={icons.brush} label="格式刷" drop={false} />
      </Group>
      <Group $width={280} $launcher>
        <Stack>
          <Row>
            <Select width={139} value="等线" name="字体" />
            <Select width={71} value="18" name="字号" />
            <Tool aria-label="增大字号">{icons.growFont}</Tool>
            <Tool aria-label="减小字号">{icons.shrinkFont}</Tool>
          </Row>
          <Row>
            <Tool>B</Tool>
            <Tool aria-label="倾斜">{icons.italic}</Tool>
            <Tool aria-label="下划线">{icons.underline}</Tool>
            <Tool aria-label="删除线">{icons.strike}</Tool>
            <DropTool aria-label="边框">{icons.borders}<Caret /></DropTool>
            <DropTool aria-label="绘制边框">{icons.drawBorder}<Caret /></DropTool>
            <DropTool aria-label="填充颜色">{icons.fill}<Caret /></DropTool>
            <DropTool aria-label="字体颜色">{icons.fontColor}<Caret /></DropTool>
            <DropTool aria-label="清除">{icons.eraser}<Caret /></DropTool>
          </Row>
        </Stack>
      </Group>
      <Group $width={270} $gap={13} $launcher>
        <Stack>
          <Row>
            <Tool aria-label="顶端对齐">{icons.top}</Tool>
            <Tool aria-label="垂直居中" $on>{icons.middle}</Tool>
            <Tool aria-label="底端对齐">{icons.bottom}</Tool>
            <Tool aria-label="减少缩进">{icons.outdent}</Tool>
            <Tool aria-label="增加缩进">{icons.indent}</Tool>
          </Row>
          <Row>
            <Tool aria-label="左对齐">{icons.left}</Tool>
            <Tool aria-label="水平居中" $on>{icons.center}</Tool>
            <Tool aria-label="右对齐">{icons.right}</Tool>
            <Tool aria-label="两端对齐">{icons.justify}</Tool>
            <Tool aria-label="分散对齐">{icons.distribute}</Tool>
          </Row>
        </Stack>
        <Big icon={icons.merge} label="合并居中" />
        <Big icon={icons.wrap} label="自动换行" drop={false} />
      </Group>
      <Group $width={217} $gap={6} $launcher>
        <Stack>
          <Select width={137} value="自定义" name="数字格式" />
          <Row>
            <DropTool aria-label="货币">{icons.yen}<Caret /></DropTool>
            <Tool aria-label="百分比">{icons.percent}</Tool>
            <Tool aria-label="千位分隔">{icons.thousands}</Tool>
            <Tool aria-label="增加小数">{icons.moreDecimals}</Tool>
            <Tool aria-label="减少小数">{icons.lessDecimals}</Tool>
          </Row>
        </Stack>
        <Big icon={icons.convert} label="类型转换" />
      </Group>
      <Group $width={176} $pad={10} $gap={10}>
        <Big icon={icons.condFormat} label="条件格式" />
        <Stack>
          <TextTool>{icons.tableStyle}表格样式<Caret /></TextTool>
          <TextTool>{icons.cellStyle}单元格样式<Caret /></TextTool>
        </Stack>
      </Group>
      <Group $width={188} $pad={10}>
        <Big icon={icons.sum} label="求和" />
        <Big icon={icons.filter} label="筛选" />
        <Big icon={icons.sort} label="排序" />
        <Big icon={icons.fillDown} label="填充" />
      </Group>
      <Group $width={200} $pad={10}>
        <Big icon={icons.cells} label="单元格" />
        <Big icon={icons.rowsCols} label="行和列" />
        <Big icon={icons.sheet} label="工作表" />
      </Group>
    </Ribbon>

    <FormulaBar>
      <NameBox><input aria-label="名称框" defaultValue="G11" /><Caret /></NameBox>
      <FormulaTools>
        <button aria-label="查找">{icons.zoomOut}</button>
        <Fx>fx</Fx>
      </FormulaTools>
      <FormulaInput aria-label="编辑栏" />
    </FormulaBar>

    <Sheet />
    <PointerArrow x={589} y={603} dx={117} dy={139} />
    <FormatDialog />
    <SiteMark>
      <SiteLogo />
      <div>
        <strong>极光下载站</strong>
        <span>www.xz7.com</span>
      </div>
    </SiteMark>
  </Page>
);

export default App;
